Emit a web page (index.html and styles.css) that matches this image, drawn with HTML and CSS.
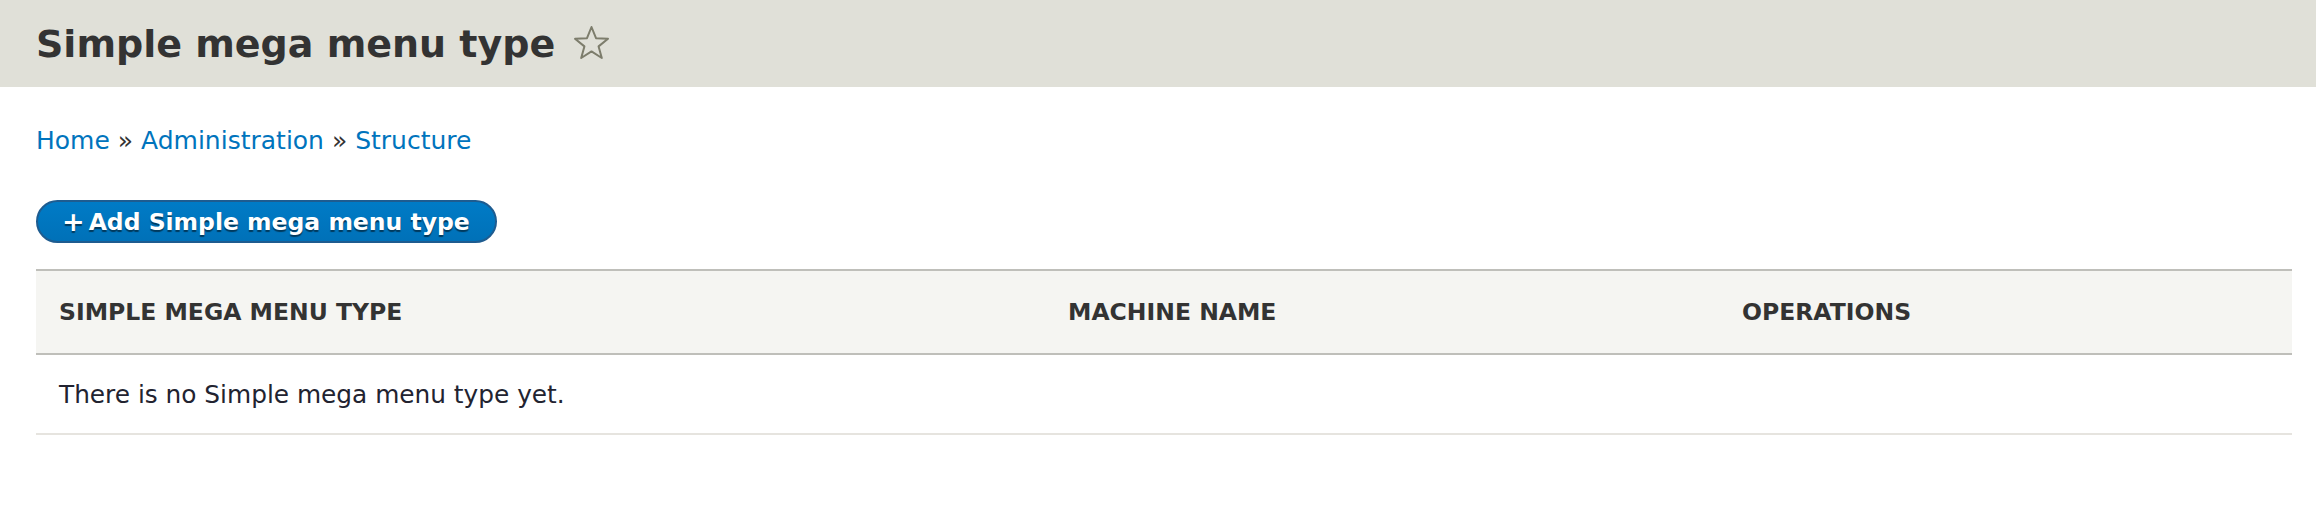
FILE: index.html
```html
<!DOCTYPE html>
<html lang="en">
<head>
  <meta charset="UTF-8" />
  <title>Simple mega menu type</title>
  <link rel="stylesheet" href="styles.css">
</head>
<body>
  <!-- Page title bar -->
  <div class="page-header">
    <h1 class="page-title">Simple mega menu type</h1>
    <svg class="shortcut-star" width="37" height="35" viewBox="0 0 37 35">
      <path d="M18.5 2 L23 13.2 L35 13.8 L25.6 21.4 L28.8 33 L18.5 26.4 L8.2 33 L11.4 21.4 L2 13.8 L14 13.2 Z" />
    </svg>
  </div>

  <div class="content">
    <nav class="breadcrumb">
      <a href="#">Home</a> » <a href="#">Administration</a> » <a href="#">Structure</a>
    </nav>

    <a href="#" class="button-primary"><span class="plus">+</span>Add Simple mega menu type</a>

    <table class="listing">
      <colgroup>
        <col class="col-label">
        <col class="col-machine">
        <col class="col-ops">
      </colgroup>
      <thead>
        <tr>
          <th>Simple mega menu type</th>
          <th>Machine name</th>
          <th>Operations</th>
        </tr>
      </thead>
      <tbody>
        <tr>
          <td colspan="3">There is no Simple mega menu type yet.</td>
        </tr>
      </tbody>
    </table>
  </div>
</body>
</html>
```

FILE: styles.css
```css
body {
  margin: 0;
  font-family: "DejaVu Sans", sans-serif;
  color: #333;
  background: white;
}

.page-header {
  display: flex;
  align-items: center;
  height: 87px;
  padding: 0 36px;
  background: #e0e0d8;
}

.page-title {
  margin: 0;
  font-size: 38px;
  font-weight: bold;
  color: #333;
}

.shortcut-star {
  margin-left: 18px;
  margin-top: -2px;
}

.shortcut-star path {
  fill: none;
  stroke: #7d7d6c;
  stroke-width: 2;
  stroke-linejoin: round;
}

.content {
  padding: 0 24px 0 36px;
}

.breadcrumb {
  margin-top: 39px;
  font-size: 25px;
  line-height: 30px;
  color: #333;
}

.breadcrumb a {
  color: #0074bd;
  text-decoration: none;
}

.button-primary {
  display: inline-flex;
  align-items: center;
  margin-top: 44px;
  height: 39px;
  padding: 0 25px 0 24px;
  border: 2px solid #1e5c90;
  border-radius: 30px;
  background: linear-gradient(#007bc6, #0071b8);
  color: white;
  font-size: 23.5px;
  font-weight: bold;
  text-decoration: none;
  text-shadow: 0 2px 1px rgba(0,0,0,0.5);
}

.button-primary .plus {
  margin-right: 4px;
  font-size: 27px;
}

.listing {
  width: 100%;
  margin-top: 26px;
  border-collapse: collapse;
  table-layout: fixed;
}

.col-label {
  width: 1009px;
}

.col-machine {
  width: 674px;
}

.listing th {
  height: 82px;
  padding: 0 23px;
  text-align: left;
  text-transform: uppercase;
  font-size: 23.5px;
  font-weight: bold;
  color: #333;
  background: #f5f5f2;
  border-top: 2px solid #bfbfba;
  border-bottom: 2px solid #bfbfba;
}

.listing td {
  height: 78px;
  padding: 0 23px;
  font-size: 24.8px;
  color: #222330;
  border-bottom: 2px solid #e6e4df;
}
```
